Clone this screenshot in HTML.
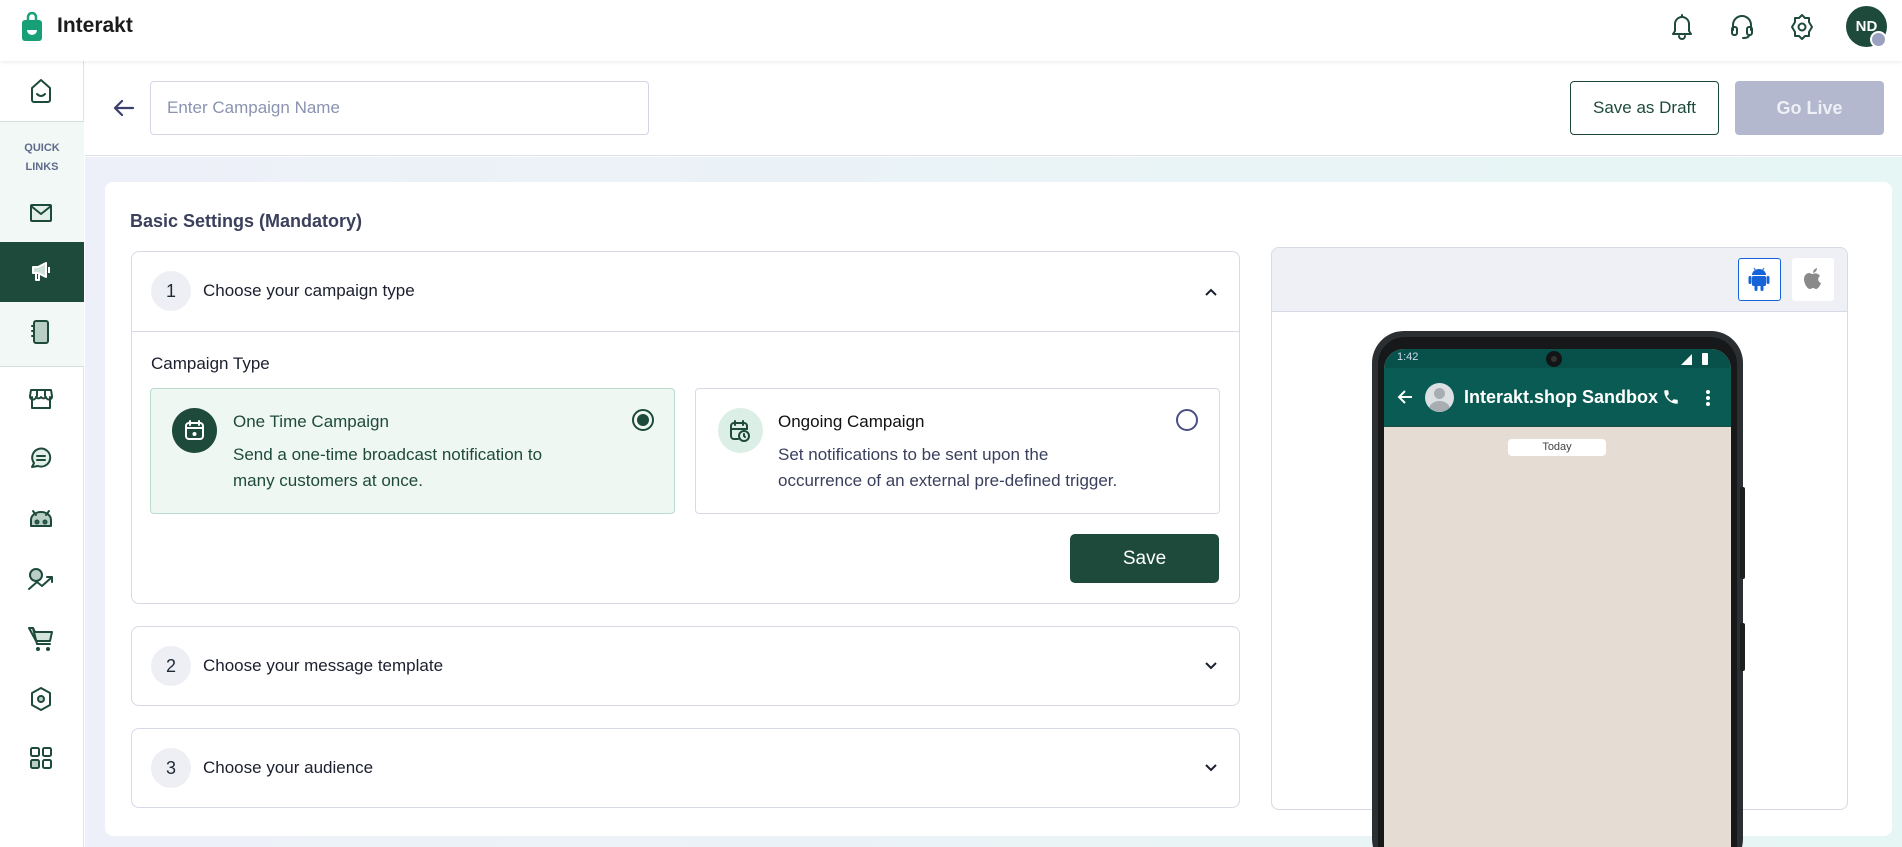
<!DOCTYPE html>
<html style="width:1902px;height:847px;overflow:hidden"><head><meta charset="utf-8"><style>
*{box-sizing:border-box;margin:0;padding:0}
body{width:1902px;height:847px;overflow:hidden;font-family:"Liberation Sans",sans-serif;background:#fff;position:relative;color:#1f2a37}
.a{position:absolute}
.ic{stroke:#1e4a3c;fill:none;stroke-width:2;stroke-linecap:round;stroke-linejoin:round}
#clip{position:absolute;left:0;top:0;width:1902px;height:847px;overflow:hidden}
</style></head><body><div id="clip">
<!-- top bar -->
<div class="a" style="left:0;top:0;width:1902px;height:61px;background:#fff;box-shadow:0 2px 3px rgba(0,0,0,.06);z-index:2"></div>
<svg class="a" style="left:22px;top:12px;z-index:3" width="20" height="30" viewBox="0 0 20 30"><path d="M6 8V5a4 4 0 0 1 8 0v3" stroke="#1aa37a" stroke-width="2.5" fill="none"/><rect x="0" y="8" width="20" height="21" rx="3" fill="#17a077"/><path d="M5 18h10a5 5 0 0 1-10 0z" fill="#fff"/></svg>
<div class="a" style="left:57px;top:14px;font-size:21px;font-weight:bold;color:#1b1b1b;z-index:3">Interakt</div>
<svg class="a ic" style="left:1669px;top:13px;z-index:3" width="26" height="28" viewBox="0 0 26 28"><path d="M4 21h18l-2-3v-7a7 7 0 0 0-14 0v7z"/><path d="M10 23a3 3 0 0 0 6 0"/><path d="M13 2v2"/></svg>
<svg class="a ic" style="left:1729px;top:13px;z-index:3" width="26" height="28" viewBox="0 0 26 28"><path d="M4 17v-5a9 9 0 0 1 18 0v5"/><rect x="3" y="14" width="5" height="8" rx="2"/><rect x="18" y="14" width="5" height="8" rx="2"/><path d="M20 22q0 3-6 3"/></svg>
<svg class="a ic" style="left:1788px;top:13px;z-index:3" width="28" height="28" viewBox="0 0 28 28"><path d="M14 2l3 3h4v4l3 5-3 5v4h-4l-3 3-3-3H7v-4l-3-5 3-5V5h4z"/><circle cx="14" cy="14" r="3.5"/></svg>
<div class="a" style="left:1846px;top:6px;width:41px;height:41px;border-radius:50%;background:#1e4a3c;color:#fff;font-weight:bold;font-size:15px;line-height:41px;text-align:center;z-index:3">ND</div>
<div class="a" style="left:1870px;top:31px;width:17px;height:17px;border-radius:50%;background:#9aa0bf;border:2px solid #fff;z-index:4"></div>

<!-- sidebar -->
<div class="a" style="left:0;top:61px;width:84px;height:786px;background:#fff;border-right:1px solid #dfe1ee"></div>
<svg class="a ic" style="left:29px;top:78px" width="24" height="26" viewBox="0 0 24 26"><path d="M3 10l9-8 9 8v12a2 2 0 0 1-2 2H5a2 2 0 0 1-2-2z"/><path d="M8 16q4 4 8 0"/></svg>
<div class="a" style="left:0;top:121px;width:84px;height:246px;background:#f2f8f5;border-top:1px solid #cfe3da;border-bottom:1px solid #cfe3da"></div>
<div class="a" style="left:0;top:139px;width:84px;text-align:center;font-size:11px;font-weight:bold;color:#5f6b8c;line-height:19px">QUICK<br>LINKS</div>
<svg class="a ic" style="left:29px;top:203px" width="24" height="20" viewBox="0 0 24 20"><rect x="2" y="2" width="20" height="16" rx="1" fill="#e3efe9"/><path d="M2 3l10 8 10-8"/></svg>
<div class="a" style="left:0;top:242px;width:84px;height:60px;background:#1e4a3c"></div>
<svg class="a" style="left:30px;top:261px" width="24" height="22" viewBox="0 0 24 22" fill="none" stroke="#fff" stroke-width="2" stroke-linejoin="round"><path d="M3 6h5l8-4v14l-8-4H3z" fill="#cfe0d8"/><path d="M6 12v7h3v-7"/><path d="M19 6v6"/></svg>
<svg class="a ic" style="left:31px;top:319px" width="20" height="26" viewBox="0 0 20 26"><rect x="3" y="2" width="14" height="22" rx="2" fill="#b9cfc5"/><path d="M3 7h-2M3 12h-2M3 17h-2"/></svg>
<svg class="a ic" style="left:28px;top:387px" width="26" height="24" viewBox="0 0 26 24"><path d="M4 10v11h18V10"/><path d="M3 3h20l1 6a3 3 0 0 1-6 1 3 3 0 0 1-5 0 3 3 0 0 1-5 0 3 3 0 0 1-6-1z"/><path d="M9 3v6M17 3v6"/></svg>
<svg class="a ic" style="left:28px;top:446px" width="26" height="24" viewBox="0 0 26 24"><path d="M4 21l2-4a9 9 0 1 1 4 3z" fill="#e3efe9"/><path d="M9 10h8M9 14h8"/></svg>
<svg class="a ic" style="left:28px;top:509px" width="26" height="20" viewBox="0 0 26 20"><path d="M3 17V11a10 8 0 0 1 20 0v6z" fill="#b9cfc5"/><path d="M5 2l3 4M21 2l-3 4"/><circle cx="9" cy="13" r="1.5"/><circle cx="17" cy="13" r="1.5"/></svg>
<svg class="a ic" style="left:27px;top:567px" width="28" height="24" viewBox="0 0 28 24"><circle cx="9" cy="8" r="6" fill="#b9cfc5"/><path d="M2 22l8-7 5 4 10-9M20 10h5v5"/></svg>
<svg class="a ic" style="left:28px;top:626px" width="26" height="26" viewBox="0 0 26 26"><path d="M1 2h4l2 4h17l-2 9H8z" fill="#d4e3dc"/><path d="M5 2l4 16h13"/><circle cx="10" cy="23" r="1"/><circle cx="20" cy="23" r="1"/></svg>
<svg class="a ic" style="left:29px;top:686px" width="24" height="26" viewBox="0 0 24 26"><path d="M12 2l9 5v12l-9 5-9-5V7z"/><circle cx="12" cy="13" r="3" fill="#b9cfc5"/></svg>
<svg class="a ic" style="left:29px;top:746px" width="24" height="24" viewBox="0 0 24 24"><rect x="2" y="2" width="8" height="8" rx="1.5"/><rect x="14" y="2" width="8" height="8" rx="1.5"/><rect x="2" y="14" width="8" height="8" rx="1.5" fill="#b9cfc5"/><rect x="14" y="14" width="8" height="8" rx="1.5"/></svg>

<!-- header row -->
<div class="a" style="left:85px;top:61px;width:1817px;height:95px;background:#fff;border-bottom:1px solid #dfe1ee"></div>
<svg class="a" style="left:112px;top:96px" width="24" height="24" viewBox="0 0 24 24" fill="none" stroke="#3a3f6b" stroke-width="2.2" stroke-linecap="round" stroke-linejoin="round"><path d="M21 12H3M10 5l-7 7 7 7"/></svg>
<div class="a" style="left:150px;top:81px;width:499px;height:54px;border:1px solid #d3d6e4;border-radius:4px;padding-left:16px;line-height:52px;font-size:17px;color:#8a93b0">Enter Campaign Name</div>
<div class="a" style="left:1570px;top:81px;width:149px;height:54px;border:1.5px solid #1e4a3c;border-radius:4px;text-align:center;line-height:51px;font-size:17px;color:#1e4a3c">Save as Draft</div>
<div class="a" style="left:1735px;top:81px;width:149px;height:54px;background:#b3b8cf;border-radius:4px;text-align:center;line-height:54px;font-size:18px;font-weight:bold;color:#eef0f6">Go Live</div>

<!-- content bg -->
<div class="a" style="left:85px;top:157px;width:1817px;height:690px;background:linear-gradient(90deg,#eef0f9,#e6f6f4)"></div>
<div class="a" style="left:105px;top:182px;width:1787px;height:654px;background:#fff;border-radius:8px"></div>
<div class="a" style="left:130px;top:211px;font-size:18px;font-weight:bold;color:#3a3f5c">Basic Settings (Mandatory)</div>

<!-- accordion 1 -->
<div class="a" style="left:131px;top:251px;width:1109px;height:353px;border:1px solid #d6d9e6;border-radius:8px"></div>
<div class="a" style="left:131px;top:331px;width:1109px;height:1px;background:#d6d9e6"></div>
<div class="a" style="left:151px;top:271px;width:40px;height:40px;border-radius:50%;background:#eeeff4;text-align:center;line-height:40px;font-size:18px">1</div>
<div class="a" style="left:203px;top:281px;font-size:17px;color:#1b1f2e">Choose your campaign type</div>
<svg class="a" style="left:1203px;top:284px" width="16" height="16" viewBox="0 0 16 16" fill="none" stroke="#1b1f2e" stroke-width="2"><path d="M3 11l5-5 5 5"/></svg>
<div class="a" style="left:151px;top:354px;font-size:17px;color:#1b1f2e">Campaign Type</div>

<div class="a" style="left:150px;top:388px;width:525px;height:126px;background:#eff7f3;border:1px solid #b9dccd;border-radius:4px"></div>
<div class="a" style="left:172px;top:408px;width:45px;height:45px;border-radius:50%;background:#1e4a3c"></div>
<svg class="a" style="left:184px;top:419px" width="21" height="22" viewBox="0 0 21 22" fill="none" stroke="#fff" stroke-width="2" stroke-linecap="round"><rect x="2" y="4" width="17" height="16" rx="3"/><path d="M6 2v4M15 2v4M2 9h17"/><circle cx="10.5" cy="15" r="1" fill="#fff"/></svg>
<div class="a" style="left:233px;top:412px;font-size:17px;color:#1e4a3c">One Time Campaign</div>
<div class="a" style="left:233px;top:442px;font-size:17px;line-height:26px;color:#1e4a3c">Send a one-time broadcast notification to<br>many customers at once.</div>
<div class="a" style="left:632px;top:409px;width:22px;height:22px;border-radius:50%;border:2px solid #1e4a3c"></div>
<div class="a" style="left:637px;top:414px;width:12px;height:12px;border-radius:50%;background:#1e4a3c"></div>

<div class="a" style="left:695px;top:388px;width:525px;height:126px;background:#fff;border:1px solid #d6d9e6;border-radius:4px"></div>
<div class="a" style="left:718px;top:408px;width:45px;height:45px;border-radius:50%;background:#dcefe6"></div>
<svg class="a" style="left:729px;top:419px" width="22" height="24" viewBox="0 0 22 24" fill="none" stroke="#1e4a3c" stroke-width="2" stroke-linecap="round"><path d="M9 20H5a3 3 0 0 1-3-3V7a3 3 0 0 1 3-3h10a3 3 0 0 1 3 3v3"/><path d="M6 2v4M14 2v4M2 10h16"/><circle cx="15" cy="17" r="5"/><path d="M15 15v2l1 1"/></svg>
<div class="a" style="left:778px;top:412px;font-size:17px;color:#111">Ongoing Campaign</div>
<div class="a" style="left:778px;top:442px;font-size:17px;line-height:26px;color:#3a3f5c">Set notifications to be sent upon the<br>occurrence of an external pre-defined trigger.</div>
<div class="a" style="left:1176px;top:409px;width:22px;height:22px;border-radius:50%;border:2px solid #4a5080"></div>

<div class="a" style="left:1070px;top:534px;width:149px;height:49px;background:#1e4a3c;border-radius:5px;text-align:center;line-height:49px;font-size:19px;color:#fff">Save</div>

<!-- accordion 2 -->
<div class="a" style="left:131px;top:626px;width:1109px;height:80px;border:1px solid #d6d9e6;border-radius:8px"></div>
<div class="a" style="left:151px;top:646px;width:40px;height:40px;border-radius:50%;background:#eeeff4;text-align:center;line-height:40px;font-size:18px">2</div>
<div class="a" style="left:203px;top:656px;font-size:17px;color:#1b1f2e">Choose your message template</div>
<svg class="a" style="left:1203px;top:658px" width="16" height="16" viewBox="0 0 16 16" fill="none" stroke="#1b1f2e" stroke-width="2"><path d="M3 5l5 5 5-5"/></svg>
<!-- accordion 3 -->
<div class="a" style="left:131px;top:728px;width:1109px;height:80px;border:1px solid #d6d9e6;border-radius:8px"></div>
<div class="a" style="left:151px;top:748px;width:40px;height:40px;border-radius:50%;background:#eeeff4;text-align:center;line-height:40px;font-size:18px">3</div>
<div class="a" style="left:203px;top:758px;font-size:17px;color:#1b1f2e">Choose your audience</div>
<svg class="a" style="left:1203px;top:760px" width="16" height="16" viewBox="0 0 16 16" fill="none" stroke="#1b1f2e" stroke-width="2"><path d="M3 5l5 5 5-5"/></svg>

<!-- preview panel -->
<div class="a" style="left:1271px;top:247px;width:577px;height:563px;border:1px solid #d6d9e6;border-radius:8px;overflow:hidden;background:#fff">
  <div style="height:64px;background:#eff0f5;border-bottom:1px solid #d6d9e6"></div>
</div>
<div class="a" style="left:1738px;top:258px;width:43px;height:43px;background:#fff;border:1.5px solid #1565d8;border-radius:3px"></div>
<svg class="a" style="left:1748px;top:266px" width="22" height="26" viewBox="0 0 22 26" fill="#1565d8"><path d="M4 9a7 6 0 0 1 14 0z"/><rect x="4" y="10" width="14" height="10" rx="1.5"/><rect x="0.5" y="10" width="3" height="8" rx="1.5"/><rect x="18.5" y="10" width="3" height="8" rx="1.5"/><rect x="6.5" y="19" width="3" height="6" rx="1.5"/><rect x="12.5" y="19" width="3" height="6" rx="1.5"/><path d="M6 2l2 3M16 2l-2 3" stroke="#1565d8" stroke-width="1"/></svg>
<div class="a" style="left:1792px;top:258px;width:42px;height:43px;background:#fff;border-radius:3px"></div>
<svg class="a" style="left:1802px;top:267px" width="22" height="24" viewBox="0 0 22 24" fill="#8a8a8a"><path d="M11 7c2-1 5-1 7 2-3 2-2 6 1 7-1 3-3 6-5 6-1 0-2-1-3-1s-2 1-3 1c-3 0-6-6-6-10 0-4 3-6 5-6 1 0 2 1 4 1z"/><path d="M11 6c0-2 1-4 4-5 0 2-1 4-4 5z"/></svg>

<!-- phone -->
<div class="a" style="left:1372px;top:331px;width:371px;height:540px;background:#2b2f31;border-radius:32px"></div>
<div class="a" style="left:1378px;top:337px;width:359px;height:540px;background:#161819;border-radius:27px"></div>
<div class="a" style="left:1740px;top:487px;width:5px;height:92px;background:#1c1e20;border-radius:2px"></div>
<div class="a" style="left:1740px;top:623px;width:5px;height:48px;background:#1c1e20;border-radius:2px"></div>
<div class="a" style="left:1384px;top:349px;width:347px;height:520px;background:#e7dfd5;border-radius:20px 20px 0 0;overflow:hidden">
  <div style="height:19px;background:#08504a"></div>
  <div style="height:59px;background:#0a5b54;border-bottom:1px solid #1d4e46"></div>
  <div style="height:450px;background:#e5ddd3"></div>
</div>
<div class="a" style="left:1397px;top:351px;font-size:11px;color:#cde">1:42</div>
<div class="a" style="left:1546px;top:351px;width:16px;height:16px;border-radius:50%;background:#121415"></div>
<div class="a" style="left:1551px;top:356px;width:6px;height:6px;border-radius:50%;background:#333"></div>
<svg class="a" style="left:1680px;top:352px" width="30" height="14" viewBox="0 0 30 14" fill="#fff"><path d="M1 13L12 2v11z"/><rect x="22" y="1" width="6" height="12" rx="1"/></svg>
<svg class="a" style="left:1396px;top:388px" width="18" height="18" viewBox="0 0 18 18" fill="none" stroke="#fff" stroke-width="2"><path d="M16 9H3M9 3L3 9l6 6"/></svg>
<div class="a" style="left:1425px;top:383px;width:29px;height:29px;border-radius:50%;background:#dde0e3;overflow:hidden"><div style="position:absolute;left:9px;top:5px;width:11px;height:11px;border-radius:50%;background:#a8adb2"></div><div style="position:absolute;left:4px;top:18px;width:21px;height:16px;border-radius:50%;background:#a8adb2"></div></div>
<div class="a" style="left:1464px;top:387px;font-size:18px;font-weight:bold;color:#fff">Interakt.shop Sandbox</div>
<svg class="a" style="left:1662px;top:388px" width="18" height="18" viewBox="0 0 24 24" fill="#fff"><path d="M6.6 10.8a15 15 0 0 0 6.6 6.6l2.2-2.2a1 1 0 0 1 1-.25 11.4 11.4 0 0 0 3.6.57 1 1 0 0 1 1 1V20a1 1 0 0 1-1 1A17 17 0 0 1 3 4a1 1 0 0 1 1-1h3.5a1 1 0 0 1 1 1c0 1.25.2 2.45.57 3.57a1 1 0 0 1-.25 1z"/></svg>
<div class="a" style="left:1706px;top:390px;width:4px;height:4px;border-radius:50%;background:#fff;box-shadow:0 6px 0 #fff,0 12px 0 #fff"></div>
<div class="a" style="left:1508px;top:439px;width:98px;height:17px;background:#fff;border-radius:4px;text-align:center;font-size:11px;line-height:17px;color:#444">Today</div>
</div></body></html>
